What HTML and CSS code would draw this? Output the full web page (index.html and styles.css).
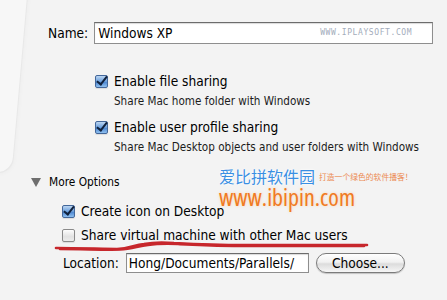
FILE: index.html
```html
<!DOCTYPE html>
<html lang="en">
<head>
    <meta charset="UTF-8">
    <title>New Virtual Machine</title>
    <link rel="stylesheet" href="styles.css">
</head>
<body>
    <div class="sheet-edge"></div>

    <div class="form">
        <!-- Name -->
        <div class="name-row">
            <label class="label" for="vmName">Name:</label>
            <div class="name-field">
                <input type="text" id="vmName" class="text-input" value="Windows XP">
                <span class="iplay">WWW.IPLAYSOFT.COM</span>
            </div>
        </div>

        <!-- Sharing -->
        <div class="share-group">
            <div class="option">
                <span class="check checked"></span>
                <span class="option-title">Enable file sharing</span>
            </div>
            <div class="option-note">Share Mac home folder with Windows</div>

            <div class="option">
                <span class="check checked"></span>
                <span class="option-title">Enable user profile sharing</span>
            </div>
            <div class="option-note">Share Mac Desktop objects and user folders with Windows</div>
        </div>

        <!-- More Options -->
        <div class="more">
            <span class="disclosure"></span>
            <span class="more-title">More Options</span>
        </div>

        <div class="more-group">
            <div class="option">
                <span class="check checked"></span>
                <span class="option-title">Create icon on Desktop</span>
            </div>
            <div class="option option-mark">
                <span class="check"></span>
                <span class="option-title">Share virtual machine with other Mac users</span>
                <svg class="marker" width="320" height="16" viewBox="0 0 320 16">
                    <path d="M2 10 C25 10 50 11 63 11 C75 11 80 7 90 6 C100 4 108 4 120 5 C140 6 160 7 190 7 C230 7 270 7 313 7" />
                    <path d="M6 11 C30 11 52 12 66 11.5 C78 11 84 8 94 7 C104 5.5 112 5.5 124 6 C145 7 165 8 195 8 C235 8 275 8 310 8" />
                </svg>
            </div>

            <div class="location-row">
                <span class="label">Location:</span>
                <input type="text" class="text-input path-input" value="Hong/Documents/Parallels/">
                <button class="aqua-btn">Choose...</button>
            </div>
        </div>
    </div>

    <!-- Watermark -->
    <div class="ibipin">
        <div class="ibipin-top">
            <span class="ibipin-name">爱比拼软件园</span>
            <span class="ibipin-slogan">打造一个绿色的软件播客！</span>
        </div>
        <div class="ibipin-url">www.ibipin.com</div>
    </div>
</body>
</html>
```

FILE: styles.css
```css
* {
    box-sizing: border-box;
    margin: 0;
    padding: 0;
}

body {
    width: 447px;
    height: 300px;
    overflow: hidden;
    position: relative;
    background: #f3f3f3;
    color: #000;
    font-family: 'DejaVu Sans', sans-serif;
    font-stretch: semi-condensed;
    font-size: 13.6px;
}

/* faint edge of the window behind */
.sheet-edge {
    position: absolute;
    left: -60px;
    top: -20px;
    width: 80px;
    height: 192px;
    border-radius: 0 0 14px 0;
    background: #f7f7f7;
    box-shadow: 1px 1px 1px rgba(0, 0, 0, 0.03), 2px 2px 4px rgba(0, 0, 0, 0.025);
    transform: skewX(-5deg);
}

.form {
    position: relative;
    padding-top: 22px;
}

.label {
    color: #000;
    font-size: 13.6px;
}

/* Name row */
.name-row {
    display: flex;
    align-items: center;
    padding-left: 48px;
    gap: 6px;
}

.name-field {
    position: relative;
    width: 339px;
}

.text-input {
    display: block;
    width: 100%;
    height: 22px;
    padding: 0 3px;
    border: 1px solid #8e8e8e;
    border-top-color: #6c6c6c;
    box-shadow: inset 0 1px 1px rgba(0, 0, 0, 0.15);
    background: #fff;
    font-family: inherit;
    font-stretch: semi-condensed;
    font-size: 13.6px;
    color: #000;
    outline: none;
}

.iplay {
    position: absolute;
    right: 21px;
    top: 6px;
    font-family: 'DejaVu Sans Mono', monospace;
    font-size: 8px;
    letter-spacing: 0.6px;
    color: #a3acbb;
}

/* option rows */
.share-group {
    padding-left: 95px;
    padding-top: 30px;
}

.option {
    display: flex;
    align-items: center;
    gap: 6px;
    height: 14px;
}

.option-title {
    font-size: 13.6px;
    line-height: 14px;
}

.option-note {
    padding-left: 19px;
    margin-top: 6px;
    margin-bottom: 12px;
    font-size: 11.6px;
    line-height: 14px;
    color: #1c1c1c;
}

.check {
    flex: none;
    width: 13px;
    height: 13px;
    border-radius: 2px;
    border: 1px solid #8a8a8a;
    background: linear-gradient(#fdfdfd, #e2e2e2 60%, #ececec);
    box-shadow: 0 1px 1px rgba(0, 0, 0, 0.1);
    position: relative;
}

.check.checked {
    border-color: #43679a;
    background: linear-gradient(#bcd6f2, #6b9fdc 50%, #4c86d0 55%, #8fc0f0);
}

.check.checked::after {
    content: '';
    position: absolute;
    left: 3px;
    top: -2px;
    width: 4px;
    height: 9px;
    border-right: 2.5px solid #10213c;
    border-bottom: 2.5px solid #10213c;
    transform: rotate(38deg);
}

/* More Options */
.more {
    display: flex;
    align-items: center;
    gap: 8px;
    padding-left: 31px;
    margin-top: 21px;
    height: 14px;
}

.disclosure {
    width: 0;
    height: 0;
    border-left: 5px solid transparent;
    border-right: 5px solid transparent;
    border-top: 9px solid #6e6e6e;
}

.more-title {
    font-size: 11.8px;
}

.more-group {
    padding-left: 62px;
    padding-top: 15px;
}

.more-group .option {
    margin-bottom: 10px;
}

.option-mark {
    position: relative;
}

.marker {
    position: absolute;
    left: -8px;
    top: 10px;
    fill: none;
    stroke: #c4161c;
    stroke-width: 2.6;
    stroke-linecap: round;
    opacity: 0.92;
}

/* Location */
.location-row {
    display: flex;
    align-items: center;
    gap: 7px;
    padding-left: 1px;
    margin-top: 11px;
}

.path-input {
    width: 183px;
    height: 20px;
    padding: 0 2px;
}

.aqua-btn {
    width: 89px;
    height: 20px;
    border-radius: 10px;
    border: 1px solid #7b7b7b;
    background: linear-gradient(#ffffff, #f1f1f1 45%, #dcdcdc 55%, #f6f6f6);
    box-shadow: 0 1px 1px rgba(0, 0, 0, 0.2);
    font-family: inherit;
    font-stretch: semi-condensed;
    font-size: 13.6px;
    color: #000;
}

/* ibipin watermark */
.ibipin {
    position: absolute;
    left: 219px;
    top: 166px;
}

.ibipin-top {
    display: flex;
    align-items: center;
    gap: 4px;
    height: 20px;
}

.ibipin-name {
    font-family: 'Noto Sans CJK SC', sans-serif;
    font-size: 16px;
    line-height: 20px;
    color: #3a8fe3;
    text-shadow: 0 0 2px #fff, 0 0 3px rgba(255, 255, 255, 0.9);
}

.ibipin-slogan {
    font-family: 'Noto Sans CJK SC', sans-serif;
    font-size: 7.8px;
    color: #ec8a52;
}

.ibipin-url {
    font-family: 'Open Sans', sans-serif;
    font-size: 24px;
    line-height: 22px;
    color: #f07a22;
    text-shadow: 0 0 3px rgba(255, 190, 130, 0.6);
}
```
